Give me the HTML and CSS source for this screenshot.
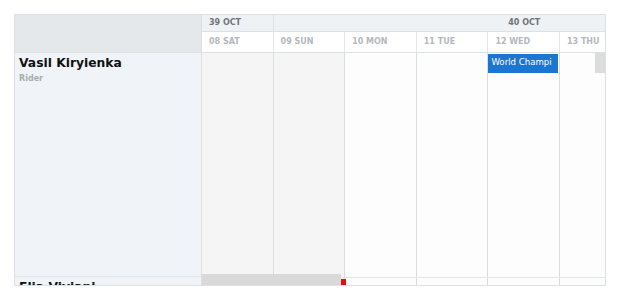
FILE: index.html
```html
<!DOCTYPE html>
<html lang="en">
<head>
    <meta charset="UTF-8">
    <title>Rider Schedule</title>
    <link rel="stylesheet" href="styles.css">
</head>
<body>
    <div class="scheduler">
        <div class="side">
            <div class="side-head"></div>
            <div class="resource">
                <div class="name">Vasil Kiryienka</div>
                <div class="role">Rider</div>
            </div>
            <div class="resource">
                <div class="name">Elia Viviani</div>
                <div class="role">Rider</div>
            </div>
        </div>

        <div class="timeline">
            <div class="weeks">
                <div class="week first">39 OCT</div>
                <div class="week full">40 OCT</div>
            </div>
            <div class="days">
                <div class="day">08 SAT</div>
                <div class="day">09 SUN</div>
                <div class="day">10 MON</div>
                <div class="day">11 TUE</div>
                <div class="day">12 WED</div>
                <div class="day">13 THU</div>
                <div class="day">14 FRI</div>
                <div class="day">15 SAT</div>
            </div>
            <div class="lane">
                <div class="cell weekend"></div>
                <div class="cell weekend"></div>
                <div class="cell"></div>
                <div class="cell"></div>
                <div class="cell">
                    <div class="event">World Champi</div>
                </div>
                <div class="cell"></div>
                <div class="cell"></div>
                <div class="cell weekend"></div>
            </div>
            <div class="lane">
                <div class="cell weekend"></div>
                <div class="cell weekend"></div>
                <div class="cell"></div>
                <div class="cell"></div>
                <div class="cell"></div>
                <div class="cell"></div>
                <div class="cell"></div>
                <div class="cell weekend"></div>
            </div>
            <div class="vscroll"></div>
            <div class="hscroll"></div>
            <div class="marker"></div>
        </div>
    </div>
</body>
</html>
```

FILE: styles.css
```css
body {
    margin: 0;
    padding: 14px;
    background: #fff;
    font-family: "DejaVu Sans", sans-serif;
}
.scheduler {
    display: flex;
    width: 590px;
    height: 270px;
    border: 1px solid #dde1e4;
    overflow: hidden;
}
.side {
    width: 186px;
    flex-shrink: 0;
    border-right: 1px solid #dcdfe2;
    background-color: #f0f4f8;
}
.side-head {
    height: 37px;
    background-color: #e4e8eb;
    border-bottom: 1px solid #dde1e4;
}
.resource {
    height: 224px;
    padding: 3px 4px;
    box-sizing: border-box;
    border-bottom: 1px solid #e3e7ea;
}
.name {
    font-size: 12.3px;
    font-weight: bold;
    color: #111;
    line-height: 15px;
}
.role {
    font-size: 8px;
    font-weight: bold;
    color: #a9adb0;
    margin-top: 3px;
}

.timeline {
    position: relative;
    flex: 1;
    overflow: hidden;
}
.weeks, .days, .lane {
    display: flex;
    width: 573px;
}
.weeks {
    height: 16px;
    background-color: #eef2f5;
    border-bottom: 1px solid #dde1e4;
}
.week {
    font-size: 8px;
    font-weight: bold;
    color: #6f7478;
    line-height: 15px;
    box-sizing: border-box;
}
.week.first {
    width: 71.6px;
    padding-left: 7px;
    border-right: 1px solid #dde1e4;
}
.week.full {
    flex: 1;
    text-align: center;
}
.days {
    height: 20px;
    background-color: #fff;
    border-bottom: 1px solid #dde1e4;
}
.day {
    width: 71.6px;
    flex-shrink: 0;
    box-sizing: border-box;
    padding-left: 7px;
    font-size: 8px;
    font-weight: bold;
    color: #b4b8bc;
    line-height: 20px;
    border-right: 1px solid #e3e6e8;
}
.lane {
    height: 224px;
    border-bottom: 1px solid #e3e7ea;
}
.cell {
    width: 71.6px;
    flex-shrink: 0;
    box-sizing: border-box;
    border-right: 1px solid #dcdcdc;
    background-color: #fdfdfd;
    padding-top: 1px;
}
.cell.weekend {
    background-color: #f5f5f5;
}
.event {
    height: 19px;
    width: 70px;
    background-color: #1b76d3;
    color: #fff;
    font-size: 8.6px;
    line-height: 17px;
    padding-left: 3px;
    box-sizing: border-box;
    white-space: nowrap;
    overflow: hidden;
}
.vscroll {
    position: absolute;
    left: 393px;
    top: 38px;
    width: 11px;
    height: 20px;
    background-color: #dcdcdc;
}
.hscroll {
    position: absolute;
    left: 0;
    top: 259px;
    width: 139px;
    height: 11px;
    background-color: #d9d9d9;
}
.marker {
    position: absolute;
    left: 139px;
    top: 264px;
    width: 5px;
    height: 6px;
    background-color: #e01010;
}
```
